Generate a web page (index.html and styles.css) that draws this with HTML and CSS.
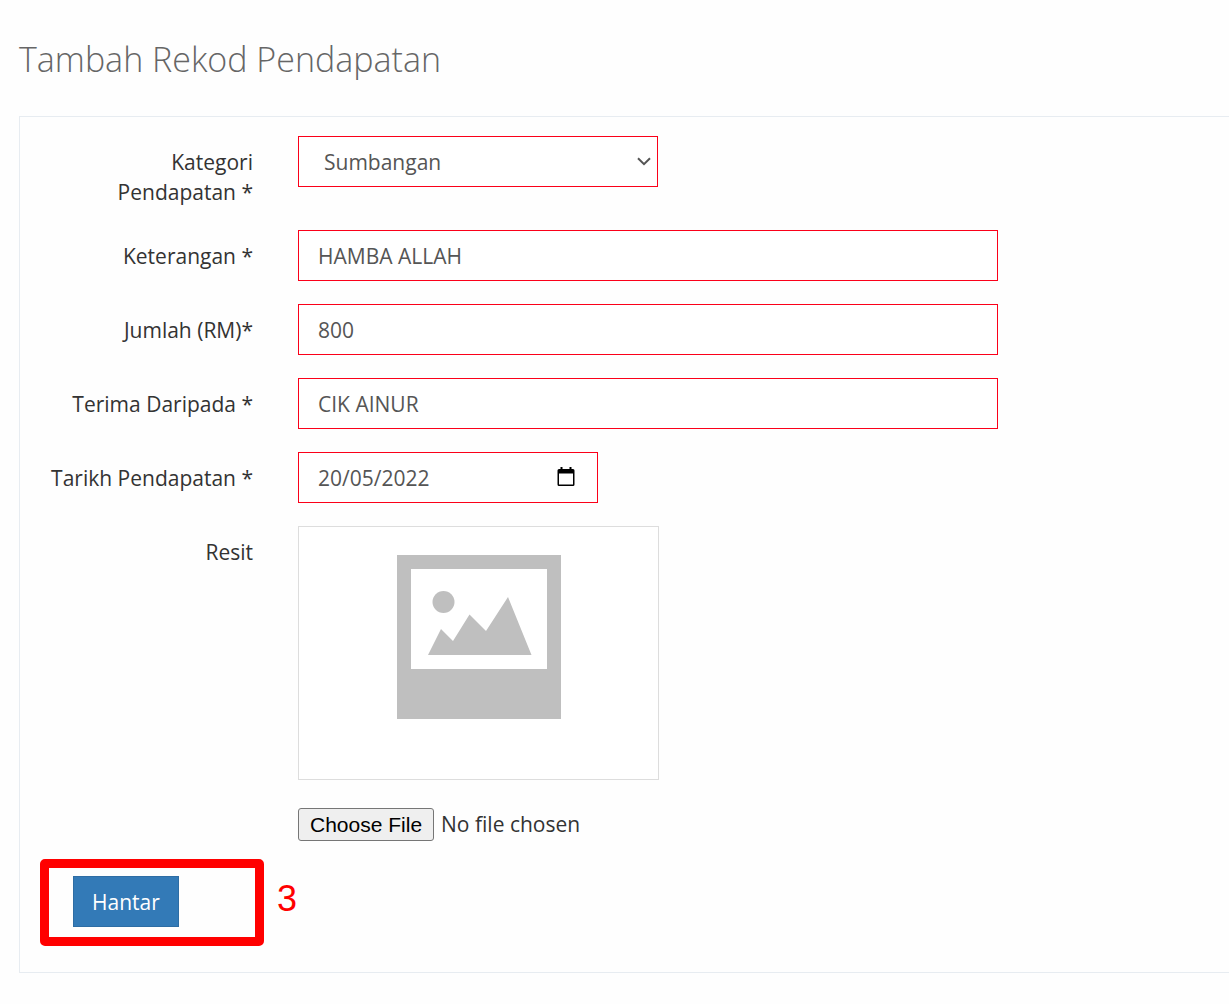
FILE: index.html
```html
<!DOCTYPE html>
<html lang="ms">
<head>
    <meta charset="UTF-8">
    <meta name="viewport" content="width=device-width, initial-scale=1.0">
    <title>Tambah Rekod Pendapatan</title>
    <link rel="stylesheet" href="styles.css">
</head>
<body>
    <h1 class="page-title">Tambah Rekod Pendapatan</h1>

    <form class="portlet">
        <div class="form-body">
            <div class="form-group">
                <label class="control-label" for="kategori">Kategori Pendapatan *</label>
                <div class="select-wrap">
                    <select class="form-control form-select" id="kategori">
                        <option selected>Sumbangan</option>
                    </select>
                    <svg class="chevron" width="14" height="9" viewBox="0 0 14 9" aria-hidden="true">
                        <path d="M1 1.2 L7 7.2 L13 1.2" fill="none" stroke="#555" stroke-width="2"/>
                    </svg>
                </div>
            </div>

            <div class="form-group">
                <label class="control-label" for="keterangan">Keterangan *</label>
                <input type="text" class="form-control" id="keterangan" value="HAMBA ALLAH">
            </div>

            <div class="form-group">
                <label class="control-label" for="jumlah">Jumlah (RM)*</label>
                <input type="text" class="form-control" id="jumlah" value="800">
            </div>

            <div class="form-group">
                <label class="control-label" for="terima">Terima Daripada *</label>
                <input type="text" class="form-control" id="terima" value="CIK AINUR">
            </div>

            <div class="form-group">
                <label class="control-label" for="tarikh">Tarikh Pendapatan *</label>
                <div class="date-wrap">
                    <input type="text" class="form-control" id="tarikh" value="20/05/2022">
                    <button type="button" class="date-button" aria-label="Pilih tarikh">
                        <svg width="18" height="20" viewBox="0 0 18 20" aria-hidden="true">
                            <path d="M3.5 0h2v2h7V0h2v2H16a1.5 1.5 0 0 1 1.5 1.5v14A1.5 1.5 0 0 1 16 19H2A1.5 1.5 0 0 1 .5 17.500v-14A1.5 1.5 0 0 1 2 2h1.500zM2 6.500v11h14v-11z" fill="#000" fill-rule="evenodd"/>
                        </svg>
                    </button>
                </div>
            </div>

            <div class="form-group">
                <label class="control-label" for="resit">Resit</label>
                <div class="upload">
                    <div class="thumbnail">
                        <svg width="164" height="164" viewBox="0 0 164 164" aria-hidden="true">
                            <path d="M0 0h164v164H0zM14 14v100h136V14z" fill="#bfbfbf" fill-rule="evenodd"/>
                            <circle cx="46.500" cy="47" r="11" fill="#bfbfbf"/>
                            <path d="M31 100 L44 74 L56 86 L72.500 59.500 L89 76 L111 42 L134.500 100z" fill="#bfbfbf"/>
                        </svg>
                    </div>
                    <input type="file" class="file-input" id="resit">
                </div>
            </div>
        </div>

        <div class="form-actions">
            <div class="highlight">
                <button type="submit" class="btn-primary">Hantar</button>
            </div>
            <span class="step">3</span>
        </div>
    </form>
</body>
</html>
```

FILE: styles.css
```css
* {
    box-sizing: border-box;
}

body {
    margin: 0;
    padding: 32px 0 32px 19px;
    background: #fefefe;
    color: #333;
    font-family: 'Open Sans', sans-serif;
    font-size: 21px;
    line-height: 30px;
}

.page-title {
    margin: 0 0 30px;
    color: #666;
    font-size: 34px;
    font-weight: 300;
    line-height: 54px;
}

.portlet {
    border: 1px solid #e7ecf1;
    border-right: 0;
    padding: 19px 20px 26px;
}

.form-body {
    display: flex;
    flex-direction: column;
    gap: 23px;
    padding-left: 10px;
}

.form-group {
    display: grid;
    grid-template-columns: 203px minmax(0, 700px);
    column-gap: 45px;
    align-items: start;
}

.control-label {
    padding-top: 11px;
    text-align: right;
}

.form-control {
    display: block;
    width: 100%;
    height: 51px;
    padding: 8px 19px;
    border: 1px solid #fb0019;
    border-radius: 0;
    background: #fff;
    color: #555;
    font-family: inherit;
    font-size: 21px;
    line-height: 30px;
    outline: none;
}

.select-wrap {
    position: relative;
    max-width: 360px;
}

.form-select {
    appearance: none;
    padding-left: 25px;
}

.chevron {
    position: absolute;
    top: 21px;
    right: 7px;
    pointer-events: none;
}

.date-wrap {
    position: relative;
    max-width: 300px;
}

.date-button {
    position: absolute;
    top: 15px;
    right: 23px;
    padding: 0;
    border: 0;
    background: none;
    line-height: 0;
    cursor: pointer;
}

.upload {
    display: flex;
    flex-direction: column;
    gap: 28px;
}

.thumbnail {
    max-width: 361px;
    padding: 28px 0 60px;
    border: 1px solid #ddd;
    background: #fff;
    line-height: 0;
    text-align: center;
}

.file-input {
    color: #333;
    font-family: inherit;
    font-size: 21px;
    line-height: 30px;
}

.file-input::file-selector-button {
    height: 33px;
    margin: 0 7px 0 0;
    padding: 0 11px;
    border: 1px solid #767676;
    border-radius: 3px;
    background: #efefef;
    color: #000;
    font-family: 'Liberation Sans', sans-serif;
    font-size: 21px;
}

.form-actions {
    display: flex;
    align-items: center;
    gap: 13px;
    margin-top: 18px;
}

.highlight {
    width: 224px;
    padding: 8px 24px 10px;
    border: 9px solid #f00;
    border-radius: 5px;
}

.btn-primary {
    display: block;
    height: 51px;
    padding: 0 18px;
    border: 1px solid #2e6da4;
    background: #337ab7;
    color: #fff;
    font-family: inherit;
    font-size: 21px;
    line-height: 30px;
    cursor: pointer;
}

.step {
    padding-bottom: 8px;
    color: #f00;
    font-family: 'Liberation Sans', sans-serif;
    font-size: 36px;
}
```
